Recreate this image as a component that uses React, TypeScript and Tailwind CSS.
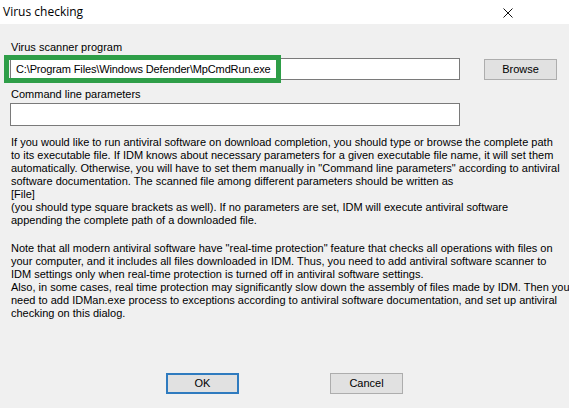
const para1 = [
    'If you would like to run antiviral software on download completion, you should type or browse the complete path',
    'to its executable file. If IDM knows about necessary parameters for a given executable file name, it will set them',
    'automatically. Otherwise, you will have to set them manually in "Command line parameters" according to antiviral',
    'software documentation. The scanned file among different parameters should be written as',
    '[File]',
    '(you should type square brackets as well). If no parameters are set, IDM will execute antiviral software',
    'appending the complete path of a downloaded file.',
];

const para2 = [
    'Note that all modern antiviral software have "real-time protection" feature that checks all operations with files on',
    'your computer, and it includes all files downloaded in IDM. Thus, you need to add antiviral software scanner to',
    'IDM settings only when real-time protection is turned off in antiviral software settings.',
    'Also, in some cases, real time protection may significantly slow down the assembly of files made by IDM. Then you',
    'need to add IDMan.exe process to exceptions according to antiviral software documentation, and set up antiviral',
    'checking on this dialog.',
];

function Lines({ lines }: { lines: string[] }) {
    return (
        <div className="leading-[13px]">
            {lines.map((l, i) => (
                <div key={i} className="h-[13px] whitespace-nowrap">
                    {l}
                </div>
            ))}
        </div>
    );
}

export default function App() {
    return (
        <div className="w-[569px] h-[408px] bg-[#f0f0f0] text-black overflow-hidden flex flex-col text-[11px] font-['Liberation_Sans',Arial,sans-serif]">
            {/* title bar */}
            <div className="h-[24px] bg-white flex items-center justify-between pl-[3px] pr-[56px] shrink-0">
                <span className="text-[12px] font-['Open_Sans',sans-serif] leading-none">Virus checking</span>
                <svg width="10" height="10" viewBox="0 0 10 10" className="mt-[1px]">
                    <path d="M0.5 0.5 L9.5 9.5 M9.5 0.5 L0.5 9.5" stroke="#111" strokeWidth="1" fill="none" />
                </svg>
            </div>

            <div className="pl-[11px] pr-[12px]">
                <div className="mt-[17px] h-[13px] leading-[13px]">Virus scanner program</div>

                <div className="mt-[4px] flex items-start">
                    <div className="relative ml-[-1px] w-[450px] h-[22px] bg-white border border-[#7a7a7a] flex items-center pl-[5px] whitespace-nowrap tracking-[-0.14px]">
                        C:\Program Files\Windows Defender\MpCmdRun.exe
                        {/* highlight annotation */}
                        <div className="absolute left-[-7px] top-[-4px] w-[277px] h-[28px] border-[5px] border-[#2e9e48] pointer-events-none" />
                    </div>
                    <button className="ml-[24px] mt-[1px] w-[73px] h-[21px] bg-[#e1e1e1] border border-[#adadad] text-[11px] leading-none">
                        Browse
                    </button>
                </div>

                <div className="mt-[8px] h-[13px] leading-[13px]">Command line parameters</div>
                <div className="mt-[2px] ml-[-1px] w-[450px] h-[23px] bg-white border border-[#7a7a7a]" />

                <div className="mt-[10px]">
                    <Lines lines={para1} />
                </div>
                <div className="mt-[15px]">
                    <Lines lines={para2} />
                </div>
            </div>

            <div className="mt-auto mb-[14px] flex pl-[166px] gap-[91px]">
                <button className="w-[73px] h-[21px] bg-[#e1e1e1] border-2 border-[#2f7bbf] text-[11px] leading-none">
                    OK
                </button>
                <button className="w-[73px] h-[21px] bg-[#e1e1e1] border border-[#adadad] text-[11px] leading-none">
                    Cancel
                </button>
            </div>
        </div>
    );
}
